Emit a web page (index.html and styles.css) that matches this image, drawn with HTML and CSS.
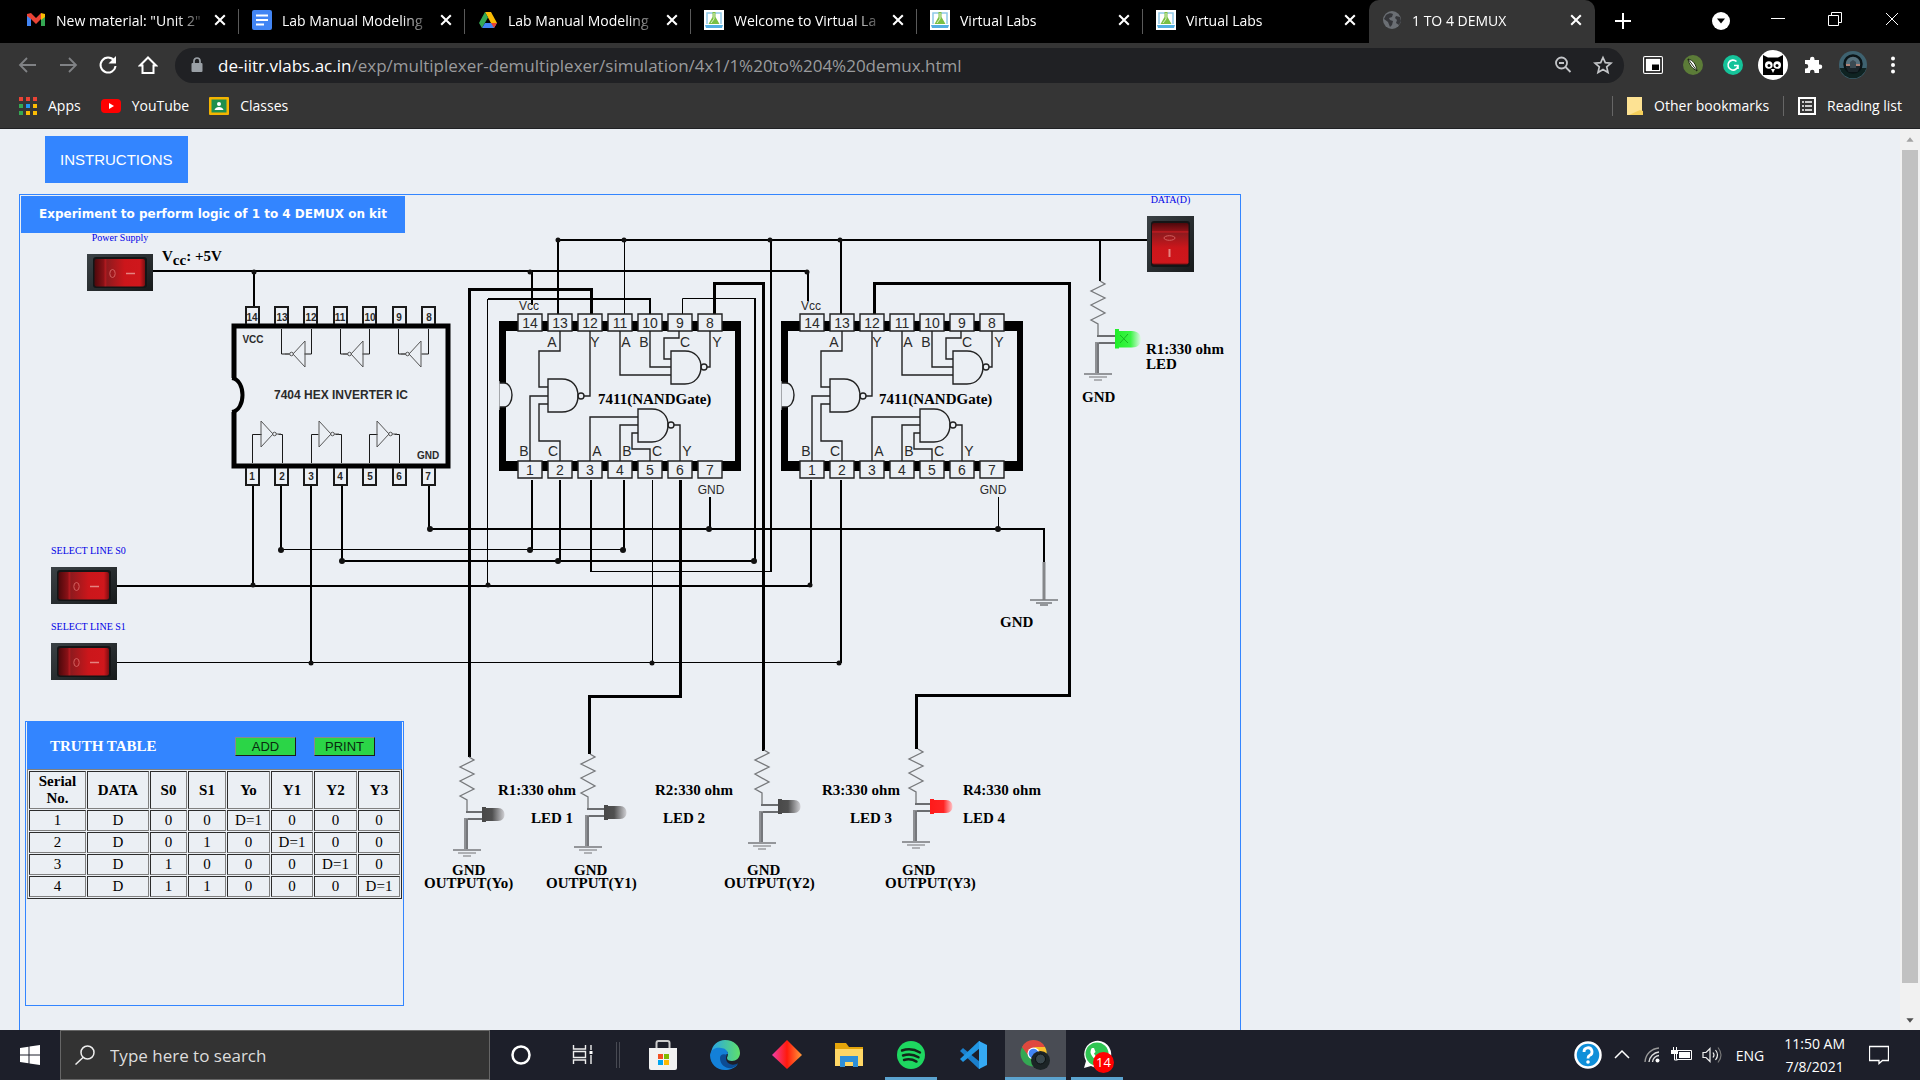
FILE: index.html
```html
<!DOCTYPE html>
<html lang="en">
<head>
<meta charset="utf-8">
<title>1 TO 4 DEMUX</title>
<link rel="stylesheet" href="styles.css">
</head>
<body>
<svg class="defs" aria-hidden="true">
  <defs>
    <linearGradient id="plate" x1="0" y1="0" x2="1" y2="1"><stop offset="0" stop-color="#3a4145"/><stop offset="1" stop-color="#171a1b"/></linearGradient>
    <linearGradient id="rocker" x1="0" x2="1"><stop offset="0" stop-color="#4d080b"/><stop offset=".19" stop-color="#8c1217"/><stop offset=".21" stop-color="#b51a20"/><stop offset=".25" stop-color="#8f1a1e"/><stop offset=".6" stop-color="#cc161b"/><stop offset=".9" stop-color="#cf171c"/><stop offset="1" stop-color="#7d0e12"/></linearGradient>
    <linearGradient id="rockerV" x1="0" x2="0" y1="0" y2="1"><stop offset="0" stop-color="#4d080b"/><stop offset=".19" stop-color="#8c1217"/><stop offset=".21" stop-color="#c01c22"/><stop offset=".25" stop-color="#8f1a1e"/><stop offset=".6" stop-color="#cc161b"/><stop offset=".95" stop-color="#cf171c"/><stop offset="1" stop-color="#7d0e12"/></linearGradient>
    <linearGradient id="ledOff"><stop offset="0" stop-color="#484848"/><stop offset=".45" stop-color="#505050"/><stop offset="1" stop-color="#cfcfd3"/></linearGradient>
    <linearGradient id="ledRed"><stop offset="0" stop-color="#ff1a1a"/><stop offset=".6" stop-color="#ff2424"/><stop offset="1" stop-color="#ffc4c8"/></linearGradient>
    <linearGradient id="ledGreen"><stop offset="0" stop-color="#20ee28"/><stop offset=".6" stop-color="#3cf546"/><stop offset="1" stop-color="#e4f7ea"/></linearGradient>
    <linearGradient id="edgeA" x1="0" x2="1" y1="0" y2="0"><stop offset="0" stop-color="#28a3e8"/><stop offset="1" stop-color="#5fe06a"/></linearGradient>
    <linearGradient id="gem"><stop offset="0" stop-color="#f03fa8"/><stop offset=".5" stop-color="#ff1a0c"/><stop offset="1" stop-color="#ff9a3a"/></linearGradient>
    <symbol id="close" viewBox="0 0 10 10"><path d="M1 1l8 8M9 1l-8 8" stroke="#fff" stroke-width="1.7"/></symbol>
    <symbol id="vlab" viewBox="0 0 20 20"><path fill="#fff" d="M0 0h20v20H0z"/><path d="M3 14V3h14v11" fill="none" stroke="#8fc9e8" stroke-width="1.5"/><path d="M8.500 2h3v5l4 7h-11l4-7z" fill="#7bc043"/><path d="M10 3v6l-3 4" stroke="#dff2c8" fill="none"/><path d="M1 15h18l-1 3H2z" fill="#52aee0"/></symbol>
    <symbol id="switchH" viewBox="0 0 66 37"><path fill="url(#plate)" d="M0 0h66v37H0z"/><rect x="6" y="3" width="54" height="31" rx="3" fill="#131516"/><rect x="7.500" y="5" width="50.500" height="27.500" rx="2" fill="url(#rocker)"/><ellipse cx="25.500" cy="19.500" rx="2.700" ry="4" fill="none" stroke="#d2605f"/><path d="M39 19.500h9" stroke="#e58380" stroke-width="1.500"/></symbol>
    <symbol id="switchV" viewBox="0 0 47 56"><path fill="url(#plate)" d="M0 0h47v56H0z"/><rect x="4" y="5" width="39" height="46" rx="3" fill="#131516"/><rect x="5" y="7" width="36.500" height="41.500" rx="2" fill="url(#rockerV)"/><ellipse cx="22.500" cy="22" rx="5.500" ry="2.300" fill="none" stroke="#d2605f"/><path d="M22.500 33v8" stroke="#e58380" stroke-width="2"/></symbol>
    <g id="load" fill="none" stroke="#77797c">
      <path stroke-width="1.300" d="M0 0l5 3-14 7 14 7-14 7 14 8-14 7 7 4v12h15"/>
      <path stroke-width="2" stroke="#6b6d70" d="M-3 55h18M-3 62h18"/>
      <path stroke-width="4" stroke="#8e9094" d="M-3 61v31"/><path d="M-2 62v30" stroke="#5d5f62"/>
      <path stroke-width="1.500" d="M-16 93h28"/><path stroke="#9a9c9f" stroke-width="1.500" d="M-11 96h18M-6 99h8"/>
    </g>
    <path id="bulb" d="M0 0h4v1h12c4.500 0 6.500 3 6.500 6.500S20.500 14 16 14H4v1H0z"/>
    <g id="inv"><path d="M0 0l-12-13v26zM3 0h5" fill="none"/><circle cx="1.500" cy="0" r="1.800" fill="#ebeff4"/></g>
    <g id="nand" fill="none" stroke="#222" stroke-width="1.400">
      <path fill="#000" stroke="none" fill-rule="evenodd" d="M499 321h242v150H499zM506 331v130h229V331z"/>
      <path fill="#ebeff4" d="M499 383h5c5 0 8 6 8 12s-3 12-8 12h-5z"/><path d="M497 381h2.500v29H497z" fill="#ebeff4" stroke="none"/>
      <path fill="#ebeff4" d="M518 314h24v17h-24zM548 314h24v17h-24zM578 314h24v17h-24zM608 314h24v17h-24zM638 314h24v17h-24zM668 314h24v17h-24zM698 314h24v17h-24zM518 461h24v17h-24zM548 461h24v17h-24zM578 461h24v17h-24zM608 461h24v17h-24zM638 461h24v17h-24zM668 461h24v17h-24zM698 461h24v17h-24z"/>
      <path d="M560 331v20h-21v36h9M530 461v-65h18M548 404h-9v37h21v20M584 396h6v-65"/>
      <path d="M548 379h14c10 0 16 7 16 17s-6 16-16 16h-14z"/><circle cx="581" cy="396" r="3"/>
      <path d="M620 331v44h51M650 331v36h21M679 331v7h-15v21h7M707 367h3v-36"/>
      <path d="M671 351h14c10 0 16 7 16 16s-6 17-16 17h-14z"/><circle cx="704" cy="367" r="3"/>
      <path d="M590 461v-44h48M620 461v-36h18M638 433h-6v16h18v12M674 425h6v36"/>
      <path d="M638 409h14c10 0 16 7 16 16s-6 17-16 17h-14z"/><circle cx="671" cy="425" r="3"/>
    </g>
  </defs>
</svg>

<header class="chrome">
  <div class="tabs">
    <div class="tab"><svg class="fav" viewBox="0 0 20 20"><path d="M1 4v12h4V8z" fill="#4285f4"/><path d="M19 4v12h-4V8z" fill="#34a853"/><path d="M1 4l4-1 5 5 5-5v6l-5 5-5-5-4-3z" fill="#ea4335"/><path d="M15 3l4 1v3l-4 3z" fill="#fbbc04"/></svg><span class="tab-name">New material: "Unit 2"</span><button class="x" aria-label="Close tab"><svg><use href="#close"/></svg></button></div>
    <div class="tab"><svg class="fav" viewBox="0 0 20 20"><rect width="20" height="20" rx="2" fill="#4285f4"/><path d="M4 5.500h12M4 10h12M4 14.500h8" stroke="#fff" stroke-width="2"/></svg><span class="tab-name">Lab Manual Modeling</span><button class="x" aria-label="Close tab"><svg><use href="#close"/></svg></button></div>
    <div class="tab"><svg class="fav" viewBox="0 0 20 20"><path d="M7 2h6l6 11h-6z" fill="#fbbc04"/><path d="M7 2l3 5.500L4 18l-3-5z" fill="#34a853"/><path d="M7 13h12l-3 5H4z" fill="#4285f4"/><path d="M19 13l-3 5-3-5z" fill="#ea4335"/></svg><span class="tab-name">Lab Manual Modeling</span><button class="x" aria-label="Close tab"><svg><use href="#close"/></svg></button></div>
    <div class="tab"><svg class="fav"><use href="#vlab"/></svg><span class="tab-name">Welcome to Virtual La</span><button class="x" aria-label="Close tab"><svg><use href="#close"/></svg></button></div>
    <div class="tab"><svg class="fav"><use href="#vlab"/></svg><span class="tab-name">Virtual Labs</span><button class="x" aria-label="Close tab"><svg><use href="#close"/></svg></button></div>
    <div class="tab last"><svg class="fav"><use href="#vlab"/></svg><span class="tab-name">Virtual Labs</span><button class="x" aria-label="Close tab"><svg><use href="#close"/></svg></button></div>
    <div class="tab active"><svg class="fav" viewBox="0 0 20 20"><circle cx="10" cy="10" r="9" fill="#6b6f74"/><path d="M4 5c3-2 5-2 7-1l-1 3-3 1 1 2 3 1-1 4-2 2-2-5-4-3zM14 6l4 1 1 4-2 4-3-2 1-3-2-2z" fill="#35363a"/></svg><span class="tab-name">1 TO 4 DEMUX</span><button class="x" aria-label="Close tab"><svg><use href="#close"/></svg></button></div>
    <button class="new" aria-label="New tab"><svg width="16" height="16" viewBox="0 0 16 16"><path d="M8 0v16M0 8h16" stroke="#fff" stroke-width="2"/></svg></button>
    <div class="win">
      <button aria-label="Search tabs"><svg class="low" width="18" height="18" viewBox="0 0 18 18"><circle cx="9" cy="9" r="9" fill="#fff"/><path d="M5 6.500h8l-4 5z" fill="#000"/></svg></button>
      <button aria-label="Minimise"><svg width="14" height="14" viewBox="0 0 14 14"><path d="M0 6.500h14" stroke="#fff"/></svg></button>
      <button aria-label="Restore"><svg width="14" height="14" viewBox="0 0 14 14"><path d="M.5 3.500h10v10H.5zM3.500 3V.5h10v10H11" fill="none" stroke="#fff"/></svg></button>
      <button aria-label="Close"><svg width="14" height="14" viewBox="0 0 14 14"><path d="M1 1l12 12M13 1L1 13" stroke="#fff"/></svg></button>
    </div>
  </div>
  <div class="toolbar">
    <button class="ib" aria-label="Back"><svg viewBox="0 0 20 20"><path d="M18 10H3M9 3l-7 7 7 7" fill="none" stroke="#808285" stroke-width="1.800"/></svg></button>
    <button class="ib" aria-label="Forward"><svg viewBox="0 0 20 20"><path d="M2 10h15M11 3l7 7-7 7" fill="none" stroke="#808285" stroke-width="1.800"/></svg></button>
    <button class="ib" aria-label="Reload"><svg viewBox="0 0 20 20"><path d="M16 5.500A7.500 7.500 0 1 0 17.500 11" fill="none" stroke="#fff" stroke-width="2"/><path d="M18 1v7.500h-7.500z" fill="#fff"/></svg></button>
    <button class="ib" aria-label="Home"><svg viewBox="0 0 20 20"><path d="M2 10.500L10 2.500l8 8h-2.500V18h-11v-7.500z" fill="none" stroke="#fff" stroke-width="2"/></svg></button>
    <div class="pill">
      <svg class="lock" viewBox="0 0 12 16"><path d="M3 7V4a3 3 0 0 1 6 0v3" fill="none" stroke="#9aa0a6" stroke-width="1.700"/><rect x="0.500" y="6" width="11" height="9" rx="1" fill="#9aa0a6"/></svg>
      <a class="url" href="#"><b>de-iitr.vlabs.ac.in</b>/exp/multiplexer-demultiplexer/simulation/4x1/1%20to%204%20demux.html</a>
      <button class="ib" aria-label="Zoom"><svg viewBox="0 0 20 20"><circle cx="8.500" cy="8" r="5.500" fill="none" stroke="#c3c5c8" stroke-width="1.800"/><path d="M12.500 12l5 5M6 8h5" stroke="#c3c5c8" stroke-width="1.800"/></svg></button>
      <button class="ib" aria-label="Bookmark"><svg viewBox="0 0 20 20"><path d="M10 2.500l2.300 5.200 5.700.5-4.300 3.700 1.300 5.600-5-3-5 3 1.300-5.600L2 8.200l5.700-.5z" fill="none" stroke="#c3c5c8" stroke-width="1.700"/></svg></button>
    </div>
    <button class="ib" aria-label="Picture in picture"><svg viewBox="0 0 20 20"><rect x="0" y="1" width="20" height="18" rx="2" fill="#fff"/><rect x="2" y="3" width="16" height="14" fill="none" stroke="#000" stroke-width="1.500"/><path d="M9 9.500h7V15H9z" fill="#000"/></svg></button>
    <button class="ib" aria-label="Editor"><svg viewBox="0 0 20 20"><circle cx="10" cy="10" r="10" fill="#5c7c38"/><path d="M5 4c5 1 8 5 9 12-4-2-8-6-9-12z" fill="#fff" stroke="#1e2a12"/><path d="M5 4l9 12" stroke="#1e2a12"/></svg></button>
    <button class="ib" aria-label="Grammar"><svg viewBox="0 0 20 20"><circle cx="10" cy="10" r="10" fill="#15c39a"/><path d="M13.500 6.500a5 5 0 1 0 1.500 4h-4M15 10.500V14" fill="none" stroke="#fff" stroke-width="1.600"/></svg></button>
    <button class="ib" aria-label="Owl"><svg class="big" viewBox="0 0 30 30"><circle cx="15" cy="15" r="15" fill="#fff"/><path d="M5 5l5 2.500h10L25 5v20H5z" fill="#000"/><circle cx="10.800" cy="15" r="3.800" fill="#fff"/><circle cx="19.200" cy="15" r="3.800" fill="#fff"/><circle cx="11" cy="15.500" r="1.500"/><circle cx="19" cy="15.500" r="1.500"/><path d="M13 19h4l-2 4z" fill="#fff"/></svg></button>
    <button class="ib" aria-label="Extensions"><svg viewBox="0 0 20 20"><path d="M2 5h5V4a2 2 0 0 1 4.500 0v1H16v4.500h1a2.200 2.200 0 0 1 0 4.500h-1v4h-4.500v-1a2 2 0 0 0-4.500 0v1H2v-4.500h1a2 2 0 0 0 0-4.500H2z" fill="#fff"/></svg></button>
    <button class="ib" aria-label="Profile"><svg class="big" viewBox="0 0 30 30"><circle cx="15" cy="15" r="14" fill="#3e6270"/><path d="M1.500 18h27a14 14 0 0 1-27 0z" fill="#0f2322"/><circle cx="15" cy="14" r="8.500" fill="#56707c" stroke="#0b1417" stroke-width="2.500"/><path d="M8 14h14v2H8z" fill="#b08478"/><path d="M7.500 16h15l-3 6h-9z" fill="#1b262b"/><path d="M12 12l3-2 3 2v6h-6z" fill="#3b4a52"/></svg></button>
    <button class="ib" aria-label="Menu"><svg viewBox="0 0 20 20"><circle cx="10" cy="3.500" r="2" fill="#fff"/><circle cx="10" cy="10" r="2" fill="#fff"/><circle cx="10" cy="16.500" r="2" fill="#fff"/></svg></button>
  </div>
  <nav class="marks">
    <a href="#"><svg width="18" height="18" viewBox="0 0 18 18"><path d="M0 0h4v4H0zM7 0h4v4H7zM14 0h4v4h-4z" fill="#ea4335"/><path d="M0 7h4v4H0z" fill="#34a853"/><path d="M7 7h4v4H7z" fill="#2196f3"/><path d="M14 7h4v4h-4zM7 14h4v4H7zM14 14h4v4h-4z" fill="#fbbc04"/><path d="M0 14h4v4H0z" fill="#34a853"/></svg>Apps</a>
    <a href="#"><svg width="20" height="20" viewBox="0 0 20 20"><rect y="3" width="20" height="14" rx="4" fill="#f00"/><path d="M8 7l5 3-5 3z" fill="#fff"/></svg>YouTube</a>
    <a href="#"><svg width="20" height="20" viewBox="0 0 20 20"><rect y="1" width="20" height="18" rx="1" fill="#f4b400"/><path d="M2.500 3.500h15v13h-15z" fill="#1f8f4e"/><circle cx="10" cy="8" r="2" fill="#fff"/><path d="M5.500 14c1-4 8-4 9 0z" fill="#fff"/></svg>Classes</a>
    <i class="grow"></i><i class="bar"></i>
    <a href="#" class="wide"><svg width="16" height="20" viewBox="0 0 16 20"><path d="M0 1h15v14l1 4H0z" fill="#fde293"/><path d="M13 14l3 1v4H2z" fill="#f5cf5a"/></svg>Other bookmarks</a>
    <i class="bar"></i>
    <a href="#"><svg width="18" height="18" viewBox="0 0 18 18"><path d="M1 1h16v16H1z" fill="none" stroke="#fff" stroke-width="2"/><path d="M7 5h7M7 9h7M7 13h7M4 5h2M4 9h2M4 13h2" stroke="#fff" stroke-width="1.700"/></svg>Reading list</a>
  </nav>
</header>

<div class="view">
  <main class="page">
    <button class="instructions">INSTRUCTIONS</button>
    <section class="kit">
      <svg class="circuit" viewBox="20 195 1220 850">
        <g class="wire">
          <path d="M153 271H808M254 271v36M532 271v34M808 271v30"/>
          <path d="M558 240H1147M558 240v74M771 240V572M841 240v74M1100 240v41"/>
          <path d="M650 315V299H488M755 298V561H342V486"/>
          <path d="M253 486V586M117 586H811V480M281 486v64M311 486V663M429 486V529H1044V562"/>
          <path d="M532 480v70M560 480v81M624 480v70M710 497v32M841 480V663"/>
          <path d="M591 480v92"/>
        </g>
        <g class="wire thin">
          <path d="M624.500 240v74M487.500 299V586M682.500 317V298.500H756M281 549.500H624M591 571.500H771M652.500 480V663M116 662.500H840M998.500 497v32"/>
        </g>
        <g class="wire thick">
          <path d="M591.500 315V289.500H469.500V757M714.500 315V283.500H763.500V751M680.500 480V696.500H589.500V754M874.500 315V283.500H1069.500V695.500H916.500V749"/>
        </g>
        <g class="dot">
          <circle cx="254" cy="272" r="2.500"/><circle cx="530" cy="272" r="2.500"/><circle cx="807" cy="272" r="2.500"/>
          <circle cx="558" cy="240" r="2.500"/><circle cx="624" cy="240" r="2.500"/><circle cx="770" cy="240" r="2.500"/><circle cx="840" cy="240" r="2.500"/>
          <circle cx="253" cy="585" r="2.500"/><circle cx="488" cy="585" r="2.500"/><circle cx="810" cy="585" r="2.500"/>
          <circle cx="281" cy="550" r="3"/><circle cx="530" cy="550" r="3"/><circle cx="623" cy="550" r="3"/>
          <circle cx="342" cy="561" r="3"/><circle cx="558" cy="561" r="3"/><circle cx="754" cy="561" r="3"/>
          <circle cx="430" cy="529" r="3"/><circle cx="709" cy="529" r="3"/><circle cx="998" cy="529" r="3"/>
          <circle cx="311" cy="663" r="2.500"/><circle cx="652" cy="663" r="2.500"/><circle cx="839" cy="663" r="2.500"/>
        </g>

        <g class="hex" fill="none" stroke="#1a1a1a">
          <path d="M234 378V326H448V466H234V412" stroke="#000" stroke-width="5"/>
          <path d="M232 378c14 2 14 32 0 34" stroke="#000" stroke-width="4"/>
          <path stroke-width="2" d="M246 324v-17h13v17M275 324v-17h13v17M304 324v-17h13v17M334 324v-17h13v17M363 324v-17h13v17M393 324v-17h13v17M422 324v-17h13v17M246 468v17h13v-17M275 468v17h13v-17M304 468v17h13v-17M334 468v17h13v-17M363 468v17h13v-17M393 468v17h13v-17M422 468v17h13v-17"/>
          <path d="M281.500 329v25h8M311.500 329v25h-7M340.500 329v25h8M369.500 329v25h-7M398.500 329v25h8M428.500 329v25h-7M252.500 463v-28.500h9M282.500 463v-28.500h-4M311.500 463v-28.500h7M341.500 463v-28.500h-6M369.500 463v-28.500h8M399.500 463v-28.500h-5"/>
          <g stroke="#555"><use href="#inv" x="273" y="434"/><use href="#inv" x="331" y="434"/><use href="#inv" x="389" y="434"/>
          <use href="#inv" transform="translate(293 354) rotate(180)"/><use href="#inv" transform="translate(351 354) rotate(180)"/><use href="#inv" transform="translate(409 354) rotate(180)"/></g>
        </g>
        <g class="pin bold">
          <text x="252" y="321">14</text><text x="282" y="321">13</text><text x="311" y="321">12</text><text x="340" y="321">11</text><text x="370" y="321">10</text><text x="399" y="321">9</text><text x="429" y="321">8</text>
          <text x="252" y="480">1</text><text x="282" y="480">2</text><text x="311" y="480">3</text><text x="340" y="480">4</text><text x="370" y="480">5</text><text x="399" y="480">6</text><text x="428" y="480">7</text>
          <text x="253" y="343">VCC</text><text x="428" y="459">GND</text>
          <text class="chip-name" x="341" y="399">7404 HEX INVERTER IC</text>
        </g>

        <use href="#nand"/><use href="#nand" x="282"/>
        <g class="pin">
          <text x="530" y="328">14</text><text x="560" y="328">13</text><text x="590" y="328">12</text><text x="620" y="328">11</text><text x="650" y="328">10</text><text x="680" y="328">9</text><text x="710" y="328">8</text>
          <text x="530" y="475">1</text><text x="560" y="475">2</text><text x="590" y="475">3</text><text x="620" y="475">4</text><text x="650" y="475">5</text><text x="680" y="475">6</text><text x="710" y="475">7</text>
          <text x="552" y="347">A</text><text x="595" y="347">Y</text><text x="626" y="347">A</text><text x="644" y="347">B</text><text x="685" y="347">C</text><text x="717" y="347">Y</text>
          <text x="524" y="456">B</text><text x="553" y="456">C</text><text x="597" y="456">A</text><text x="627" y="456">B</text><text x="657" y="456">C</text><text x="687" y="456">Y</text>
          <text class="tag" x="529" y="310">Vcc</text><text class="tag" x="711" y="494">GND</text>
        </g>
        <g class="pin" transform="translate(282 0)">
          <text x="530" y="328">14</text><text x="560" y="328">13</text><text x="590" y="328">12</text><text x="620" y="328">11</text><text x="650" y="328">10</text><text x="680" y="328">9</text><text x="710" y="328">8</text>
          <text x="530" y="475">1</text><text x="560" y="475">2</text><text x="590" y="475">3</text><text x="620" y="475">4</text><text x="650" y="475">5</text><text x="680" y="475">6</text><text x="710" y="475">7</text>
          <text x="552" y="347">A</text><text x="595" y="347">Y</text><text x="626" y="347">A</text><text x="644" y="347">B</text><text x="685" y="347">C</text><text x="717" y="347">Y</text>
          <text x="524" y="456">B</text><text x="553" y="456">C</text><text x="597" y="456">A</text><text x="627" y="456">B</text><text x="657" y="456">C</text><text x="687" y="456">Y</text>
          <text class="tag" x="529" y="310">Vcc</text><text class="tag" x="711" y="494">GND</text>
        </g>

        <use href="#load" x="1100" y="281"/><path d="M1115 329h4v2h13c6 0 9 4 9 8.500s-3 8-9 8h-13v1h-4z" fill="url(#ledGreen)"/><path d="M1120 335l8 8M1128 334l-8 9" stroke="#18b820"/>
        <use href="#load" x="469" y="757"/><use href="#bulb" x="482" y="807" fill="url(#ledOff)"/>
        <use href="#load" x="590" y="754"/><use href="#bulb" x="604" y="805" fill="url(#ledOff)"/>
        <use href="#load" x="764" y="750"/><use href="#bulb" x="778" y="799" fill="url(#ledOff)"/>
        <use href="#load" x="918" y="749"/><use href="#bulb" x="930" y="799" fill="url(#ledRed)"/>
        <path d="M1044 562v38" stroke="#85878a" stroke-width="3"/><path d="M1030 600h28M1036 603h16M1040 605h8" stroke="#77797c" stroke-width="1.300"/>

        <g class="note">
          <text x="162" y="261">V<tspan dy="4">cc</tspan><tspan dy="-4">: +5V</tspan></text>
          <text x="598" y="404">7411(NANDGate)</text><text x="879" y="404">7411(NANDGate)</text>
          <text x="1146" y="354">R1:330 ohm</text><text x="1146" y="369">LED</text><text x="1082" y="402">GND</text><text x="1000" y="627">GND</text>
          <text x="498" y="795">R1:330 ohm</text><text x="531" y="823">LED 1</text><text x="452" y="875">GND</text><text x="424" y="888">OUTPUT(Yo)</text>
          <text x="655" y="795">R2:330 ohm</text><text x="663" y="823">LED 2</text><text x="574" y="875">GND</text><text x="546" y="888">OUTPUT(Y1)</text>
          <text x="822" y="795">R3:330 ohm</text><text x="850" y="823">LED 3</text><text x="747" y="875">GND</text><text x="724" y="888">OUTPUT(Y2)</text>
          <text x="963" y="795">R4:330 ohm</text><text x="963" y="823">LED 4</text><text x="902" y="875">GND</text><text x="885" y="888">OUTPUT(Y3)</text>
        </g>
      </svg>
      <h1 class="title">Experiment to perform logic of 1 to 4 DEMUX on kit</h1>
      <div class="switch power"><label for="vcc">Power Supply</label><button id="vcc"><svg><use href="#switchH"/></svg></button></div>
      <div class="switch s0"><label for="s0">SELECT LINE S0</label><button id="s0"><svg><use href="#switchH"/></svg></button></div>
      <div class="switch s1"><label for="s1">SELECT LINE S1</label><button id="s1"><svg><use href="#switchH"/></svg></button></div>
      <div class="switch data"><label for="data">DATA(D)</label><button id="data"><svg><use href="#switchV"/></svg></button></div>

      <section class="truth">
        <div class="truth-head"><h2>TRUTH TABLE</h2><button>ADD</button><button>PRINT</button></div>
        <table>
          <colgroup><col class="c57"><col class="c62"><col class="c37"><col class="c38"><col class="c43"><col class="c42"><col class="c43"><col class="c42"></colgroup>
          <tr><th>Serial No.</th><th>DATA</th><th>S0</th><th>S1</th><th>Yo</th><th>Y1</th><th>Y2</th><th>Y3</th></tr>
          <tr><td>1</td><td>D</td><td>0</td><td>0</td><td>D=1</td><td>0</td><td>0</td><td>0</td></tr>
          <tr><td>2</td><td>D</td><td>0</td><td>1</td><td>0</td><td>D=1</td><td>0</td><td>0</td></tr>
          <tr><td>3</td><td>D</td><td>1</td><td>0</td><td>0</td><td>0</td><td>D=1</td><td>0</td></tr>
          <tr><td>4</td><td>D</td><td>1</td><td>1</td><td>0</td><td>0</td><td>0</td><td>D=1</td></tr>
        </table>
      </section>
    </section>
  </main>
  <div class="scroll" aria-hidden="true">
    <svg viewBox="0 0 20 20"><path d="M6 12h8l-4-5z" fill="#a3a3a3"/></svg>
    <div class="thumb"></div>
    <svg class="down" viewBox="0 0 20 20"><path d="M6 8h8l-4 5z" fill="#505050"/></svg>
  </div>
</div>

<footer class="taskbar">
  <button class="start" aria-label="Start"><svg width="20" height="20" viewBox="0 0 20 20"><path d="M0 3l8.500-1.200v7.700H0zM9.500 1.600L20 0v9.500H9.500zM0 10.500h8.500v7.700L0 17zM9.500 10.500H20V20L9.500 18.400z" fill="#fff"/></svg></button>
  <div class="search"><svg width="20" height="20" viewBox="0 0 20 20"><circle cx="12.500" cy="7.500" r="6.500" fill="none" stroke="#eee" stroke-width="1.500"/><path d="M8 12.500L.5 19.500" stroke="#eee" stroke-width="1.500"/></svg><input aria-label="Search" placeholder="Type here to search"></div>
  <button class="app" aria-label="Cortana"><svg viewBox="0 0 30 30"><circle cx="15" cy="15" r="8.500" fill="none" stroke="#fff" stroke-width="2.500"/></svg></button>
  <button class="app" aria-label="Task view"><svg viewBox="0 0 30 30"><path d="M5.500 5v4h12V5M5.500 24v-4h12v4M5.500 11.500h12v6h-12zM23 5v5M23 15v9" fill="none" stroke="#eee" stroke-width="1.400"/><path d="M21.500 11h3v3h-3z" fill="#fff"/></svg></button>
  <i class="split"></i>
  <button class="app" aria-label="Store"><svg viewBox="0 0 30 30"><path d="M8.500 9V3a2 2 0 0 1 2-2h9a2 2 0 0 1 2 2v6" fill="none" stroke="#ccc" stroke-width="2"/><path d="M1 8h28v20a2 2 0 0 1-2 2H3a2 2 0 0 1-2-2z" fill="#f2f2f2"/><path d="M10 14h5v5h-5z" fill="#f25022"/><path d="M16 14h5v5h-5z" fill="#7fba00"/><path d="M10 20h5v5h-5z" fill="#00a4ef"/><path d="M16 20h5v5h-5z" fill="#ffb900"/></svg></button>
  <button class="app" aria-label="Edge"><svg viewBox="0 0 30 30"><path d="M1 13C2 5 8 0 15 0c9 0 15 6 15 13 0 5-4 8-8 8-3 0-5-1-5-3 0-1 1-2 1-4 0-3-4-5-8-4s-7 2-9 3z" fill="url(#edgeA)"/><path d="M0 15C1 9 6 7 11 8c4 0 7 3 7 6-5 0-6 9 0 12 4 2 8 0 10-2-3 4-8 6-13 6C7 30 0 24 0 15z" fill="#1380d8"/><path d="M10 18c0 7 6 11 12 10 3-1 5-3 6-5-4 3-11 2-12-4 0-2 0-3 1-4-4-2-7 0-7 3z" fill="#0c4c94"/></svg></button>
  <button class="app" aria-label="Gem"><svg viewBox="0 0 30 30"><path d="M15 0l15 15-15 14L0 15z" fill="url(#gem)"/></svg></button>
  <button class="app" aria-label="Files"><svg viewBox="0 0 30 30"><path d="M1 3h11l3 4h14v19H1z" fill="#e5a50a"/><path d="M1 9h28v17H1z" fill="#ffd766"/><path d="M6 27V16h18v11h-5v-5h-8v5z" fill="#2f8fd8"/></svg></button>
  <button class="app run" aria-label="Music"><svg viewBox="0 0 30 30"><circle cx="15" cy="15" r="14" fill="#1ed760"/><path d="M6 10.500c6-2 13-1 18 2M7 15.500c5-1.600 11-1 15.500 1.800M8 20c4-1.200 8.500-.8 12.500 1.600" fill="none" stroke="#13251a" stroke-width="2.400" stroke-linecap="round"/></svg></button>
  <button class="app" aria-label="Code"><svg viewBox="0 0 30 30"><path d="M2 11l3-3 17 14v7h-1z" fill="#1b7fcc"/><path d="M2 19l3 3L22 8V1h-1z" fill="#2196e3"/><path d="M21 1l8 4v20l-8 4z" fill="#35a9f3"/></svg></button>
  <button class="app run active" aria-label="Chrome"><svg viewBox="0 0 30 30"><circle cx="13.500" cy="13.500" r="13" fill="#34a853"/><path d="M2 7a13 13 0 0 1 23 0l-11.500 1-5 8z" fill="#e0483e"/><path d="M25 7a13 13 0 0 1-11 19.500l6-13L14 7z" fill="#fbc02d"/><circle cx="13.500" cy="13.500" r="6" fill="#fff"/><circle cx="13.500" cy="13.500" r="4.800" fill="#4285f4"/><circle cx="20.500" cy="20.500" r="9.500" fill="#1c2426"/><circle cx="20.500" cy="19" r="5" fill="#39474c" stroke="#0c1213"/></svg></button>
  <button class="app run" aria-label="Messages"><svg viewBox="0 0 30 30"><path d="M2 28l2-7A13.500 13.500 0 1 1 9 26z" fill="#fff"/><circle cx="15" cy="14" r="11.500" fill="#2fc552"/><path d="M10 8l2 0 1.500 4-1.500 1.500c1 2 2 3 4 4l1.500-1.500 4 1.500c0 3-3 4-5 3-4-1-7-4-8-8 0-2 .5-3.500 1.500-4.500z" fill="#fff"/></svg><span class="badge">14</span></button>
  <i class="grow"></i>
  <svg class="tray help" viewBox="0 0 30 30"><circle cx="15" cy="15" r="12.500" fill="#0f8fd9" stroke="#fff" stroke-width="2.500"/><path d="M11 12a4 4 0 1 1 5.500 3.500c-1.500.7-1.500 1.500-1.500 3" fill="none" stroke="#fff" stroke-width="2.800"/><circle cx="15" cy="22" r="1.800" fill="#fff"/></svg>
  <svg class="tray" viewBox="0 0 30 30"><path d="M8 18l7-7 7 7" fill="none" stroke="#fff" stroke-width="1.500"/></svg>
  <svg class="tray" viewBox="0 0 30 30"><g fill="none" stroke="#ddd" stroke-width="1.400"><path d="M8 22A15 15 0 0 1 22 8" stroke="#999"/><path d="M12 22A11 11 0 0 1 22 12M15.500 22a7 7 0 0 1 6.500-6.500"/></g><circle cx="20.500" cy="20.500" r="2" fill="#fff"/></svg>
  <svg class="tray" viewBox="0 0 30 30"><path d="M9.500 10.500h15v9h-15z" fill="none" stroke="#fff"/><path d="M12 12h11v6H12zM4 10h7v4H4zM6 7h1v3H6zM9 7h1v3H9z" fill="#fff"/><path d="M7.500 14v6h3" fill="none" stroke="#fff"/></svg>
  <svg class="tray" viewBox="0 0 30 30"><g fill="none" stroke="#eee" stroke-width="1.200"><path d="M6 12.500h3l4-4v13l-4-4H6z"/><path d="M16 12.500q2 2.500 0 5"/><path d="M18.500 10q4 5 0 10" /><path d="M21 7.500q6 7.500 0 15" stroke="#777"/></g></svg>
  <span class="lang">ENG</span>
  <time class="clock">11:50 AM<br>7/8/2021</time>
  <button class="notes" aria-label="Notifications"><svg width="20" height="20" viewBox="0 0 20 20"><path d="M.5 1.500h19v14h-6l-3.500 3v-3H.5z" fill="none" stroke="#fff" stroke-width="1.300"/></svg></button>
</footer>
</body>
</html>
```
FILE: styles.css
```css
* { box-sizing: border-box; }
body {
  margin: 0;
  height: 100vh;
  display: flex;
  flex-direction: column;
  overflow: hidden;
  font-family: "Open Sans", "Noto Sans", sans-serif;
  background: #ebeff4;
}
button { border: 0; padding: 0; margin: 0; background: none; font: inherit; color: inherit; }
svg { display: block; flex: none; }
.defs { position: absolute; width: 0; height: 0; }
.grow { flex: 1; }

/* browser frame */
.chrome { background: #353535; color: #fff; border-bottom: 1px solid #202124; flex: none; }
.tabs { display: flex; height: 43px; background: #000; padding-left: 13px; font-size: 14px; }
.tab { width: 226px; display: flex; align-items: center; gap: 10px; padding: 0 13px 3px; position: relative; }
.tab:not(.last):not(.active)::after { content: ""; position: absolute; right: 0; top: 9px; height: 25px; width: 1px; background: #5a5a5a; }
.tab.active { background: #353535; border-radius: 10px 10px 0 0; }
.fav { width: 20px; height: 20px; }
.tab-name { flex: 1; white-space: nowrap; -webkit-mask-image: linear-gradient(90deg, #000 120px, transparent 152px); mask-image: linear-gradient(90deg, #000 120px, transparent 152px); }
.x { width: 12px; }
.x svg { width: 12px; height: 12px; }
.new { width: 56px; display: flex; align-items: center; justify-content: center; padding-bottom: 1px; }
.win { margin-left: auto; display: flex; align-items: center; }
.win button { width: 57px; display: flex; justify-content: center; padding-bottom: 6px; }
.win .low { margin-top: 4px; }
.toolbar { display: flex; align-items: center; height: 44px; padding: 0 7px 0 8px; }
.ib { width: 40px; display: flex; justify-content: center; align-items: center; flex: none; }
.ib svg { width: 20px; height: 20px; }
.ib .big { width: 30px; height: 30px; }
.pill { flex: 1; height: 35px; margin: 0 9px 0 7px; padding: 0 1px 0 16px; border-radius: 18px; background: #202124; display: flex; align-items: center; min-width: 0; }
.lock { width: 12px; height: 16px; margin-right: 15px; }
.url { flex: 1; font-size: 17px; color: #9a9b9d; text-decoration: none; white-space: nowrap; overflow: hidden; }
.url b { font-weight: 400; color: #fff; }
.marks { display: flex; align-items: center; height: 41px; padding: 0 18px 4px 19px; font-size: 14px; }
.marks a { display: flex; align-items: center; gap: 11px; margin-right: 20px; color: #fff; text-decoration: none; }
.marks a.wide { margin-right: 14px; }
.marks a:last-child { margin-right: 0; }
.bar { width: 1px; height: 20px; background: #666; margin-right: 14px; }

/* page */
.view { flex: 1; min-height: 0; display: flex; }
.page { flex: 1; overflow: hidden; padding: 7px 0 0 19px; font-family: "Liberation Serif", serif; }
.instructions { display: block; margin: 0 0 11px 26px; padding: 15px 15px 14px; background: #3385ff; color: #fff; font: 15px/18px "Liberation Sans", sans-serif; }
.kit { position: relative; display: grid; width: max-content; border: 1px solid #3385ff; justify-items: start; align-items: start; }
.circuit { width: 1220px; grid-area: 1 / 1; }
.title { grid-area: 1 / 1; margin: 1px; padding: 10px 18px; background: #3385ff; color: #fff; font: bold 12px/17px "DejaVu Sans", sans-serif; z-index: 1; }
.wire { fill: none; stroke: #000; stroke-width: 2; }
.wire.thin { stroke-width: 1; }
.wire.thick { stroke-width: 3; }
.dot { fill: #111; }
.pin { font: 14px "Liberation Sans", sans-serif; text-anchor: middle; fill: #2a2a2a; }
.pin .tag { font-size: 12px; }
.pin.bold { font-size: 10px; font-weight: bold; }
.pin .chip-name { font-size: 12px; }
.note { font: bold 15px "Liberation Serif", serif; fill: #000; }

.switch { position: absolute; display: flex; flex-direction: column; gap: 10px; z-index: 2; }
.switch label { font-size: 10px; line-height: 12px; color: #0000e6; white-space: nowrap; }
.switch svg { width: 66px; height: 37px; }
.power { left: 67px; top: 37px; align-items: center; }
.s0 { left: 31px; top: 350px; }
.s1 { left: 31px; top: 426px; }
.data { left: 1127px; top: -1px; align-items: center; }
.data svg { width: 47px; height: 56px; }

.truth { grid-area: 1 / 1; margin: 526px 0 0 5px; height: 285px; padding: 0 1px; border: 1px solid #3385ff; font-size: 15px; line-height: 17px; }
.truth-head { display: flex; align-items: center; height: 47px; gap: 18px; padding: 2px 27px 0 23px; background: #3385ff; color: #fff; }
.truth-head h2 { flex: 1; margin: 0; font-size: 15px; }
.truth-head button { width: 61px; height: 19px; background: #2bd547; border: 1px solid; border-color: #8a8a8a #1c1c1c #1c1c1c #8a8a8a; color: #0a2a10; font: 13px/16px "Liberation Sans", sans-serif; }
table { table-layout: fixed; width: 375px; border: 1px solid; border-color: #808080 #2c2c2c #2c2c2c #808080; border-spacing: 1px; }
th, td { border: 1px solid; border-color: #2c2c2c #808080 #808080 #2c2c2c; padding: 1px; text-align: center; }
.c57 { width: 57px; } .c62 { width: 62px; } .c37 { width: 37px; } .c38 { width: 38px; } .c43 { width: 43px; } .c42 { width: 42px; }

.scroll { width: 20px; background: #f1f1f1; display: flex; flex-direction: column; padding: 1px 1px 0; }
.scroll svg { width: 18px; height: 20px; }
.thumb { flex: 1; background: #c1c1c1; margin: 0 1px 27px; }

/* taskbar */
.taskbar { flex: none; height: 50px; display: flex; align-items: center; background: #1d1f2a; color: #fff; padding-right: 5px; }
.start { width: 60px; display: flex; justify-content: center; }
.search { width: 430px; height: 50px; display: flex; align-items: center; gap: 15px; padding-left: 14px; background: #333; border: 1px solid #666; }
.search input { flex: 1; border: 0; background: none; color: #ddd; font: 17px "Open Sans", sans-serif; padding: 0; }
.search input::placeholder { color: #ddd; opacity: 1; }
.app { width: 62px; height: 50px; display: flex; align-items: center; justify-content: center; position: relative; }
.app svg { width: 30px; height: 30px; }
.run::after { content: ""; position: absolute; left: 5px; right: 5px; bottom: 0; height: 3px; background: #5ba3cf; }
.run.active { background: linear-gradient(90deg, transparent 1px, #494c54 1px); }
.run.active::after { left: 1px; right: 0; }
.badge { position: absolute; right: 14px; top: 22px; width: 21px; height: 21px; border-radius: 11px; background: #f00; font-size: 13px; line-height: 20px; text-align: center; }
.split { width: 4px; height: 26px; border: 1px solid #484a53; border-width: 0 1px; margin: 0 12px 0 2px; }
.tray { width: 30px; height: 30px; }
.tray.help { margin-right: 4px; }
.lang { margin: 0 0 0 9px; font-size: 14px; }
.clock { margin: 0 24px 0 20px; font-size: 14px; line-height: 23px; text-align: center; }
.notes { width: 22px; margin-right: 24px; }
```
